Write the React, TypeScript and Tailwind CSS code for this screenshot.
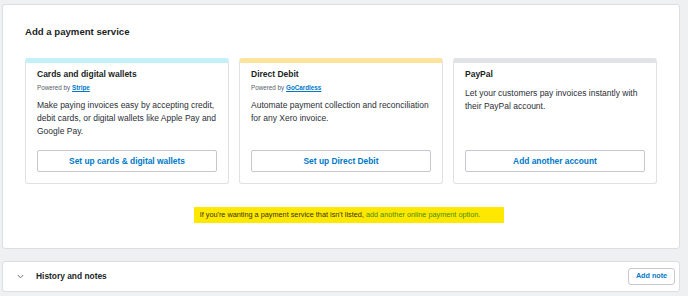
import { ReactNode } from "react";

type Service = {
  title: string;
  stripe: string;
  poweredBy?: string;
  description: string;
  action: string;
};

const services: Service[] = [
  {
    title: "Cards and digital wallets",
    stripe: "border-t-[#c4f0fa]",
    poweredBy: "Stripe",
    description:
      "Make paying invoices easy by accepting credit, debit cards, or digital wallets like Apple Pay and Google Pay.",
    action: "Set up cards & digital wallets",
  },
  {
    title: "Direct Debit",
    stripe: "border-t-[#fde49e]",
    poweredBy: "GoCardless",
    description: "Automate payment collection and reconciliation for any Xero invoice.",
    action: "Set up Direct Debit",
  },
  {
    title: "PayPal",
    stripe: "border-t-[#e2e3e6]",
    description: "Let your customers pay invoices instantly with their PayPal account.",
    action: "Add another account",
  },
];

function Panel({ children, className }: { children: ReactNode; className?: string }) {
  return (
    <div className={`ml-[2px] w-[678px] rounded-[3px] border border-[#dcdee2] bg-white ${className ?? ""}`}>
      {children}
    </div>
  );
}

function ServiceCard({ service }: { service: Service }) {
  return (
    <div
      className={`flex h-[126px] w-[204px] flex-col rounded-[3px] border border-[#dfe1e4] border-t-[5px] ${service.stripe} px-[11px] pb-[11px] pt-[6px]`}
    >
      <div className="text-[8.5px] font-bold leading-[11px] text-[#1b1f24]">{service.title}</div>
      {service.poweredBy && (
        <div className="mt-[3px] text-[6.3px] leading-[9px] text-[#59606a]">
          Powered by{" "}
          <span className="font-bold text-[#0078c8] underline">{service.poweredBy}</span>
        </div>
      )}
      <p className="mt-[7px] text-[8.5px] leading-[13px] text-[#2a2f35]">{service.description}</p>
      <button className="mt-auto h-[22px] w-full rounded-[2px] border border-[#c5c8cd] bg-white text-[8.4px] font-bold text-[#0078c8]">
        {service.action}
      </button>
    </div>
  );
}

export default function App() {
  return (
    <div
      className="h-[296px] w-[688px] overflow-hidden bg-[#eef0f2] pt-[4px]"
      style={{ fontFamily: '"Liberation Sans", Arial, sans-serif' }}
    >
      <Panel className="pb-[25px] pl-[22px] pt-[21px]">
        <h2 className="text-[9.6px] font-bold leading-[12px] text-[#1b1f24]">Add a payment service</h2>

        <div className="mt-[20px] flex gap-[10px]">
          {services.map((s) => (
            <ServiceCard key={s.title} service={s} />
          ))}
        </div>

        <div className="mt-[23px] flex justify-center pr-[6px]">
          <div className="bg-[#ffe800] pl-[6px] pr-[24px] text-[7.3px] leading-[16px] text-[#33320f]">
            If you're wanting a payment service that isn't listed,{" "}
            <span className="text-[#3f8f00]">add another online payment option.</span>
          </div>
        </div>
      </Panel>

      <Panel className="mt-[12px] flex h-[31px] items-center pl-[14px] pr-[4px]">
        <svg width="7" height="5" viewBox="0 0 7 5" className="shrink-0">
          <polyline points="0.8,1 3.5,3.8 6.2,1" fill="none" stroke="#6b7280" strokeWidth="1" />
        </svg>
        <span className="ml-[12px] text-[8.4px] font-bold text-[#1b1f24]">History and notes</span>
        <button className="ml-auto h-[17px] w-[47px] rounded-[3px] border border-[#c5c8cd] bg-white text-[7.2px] font-bold text-[#0078c8]">
          Add note
        </button>
      </Panel>
    </div>
  );
}
